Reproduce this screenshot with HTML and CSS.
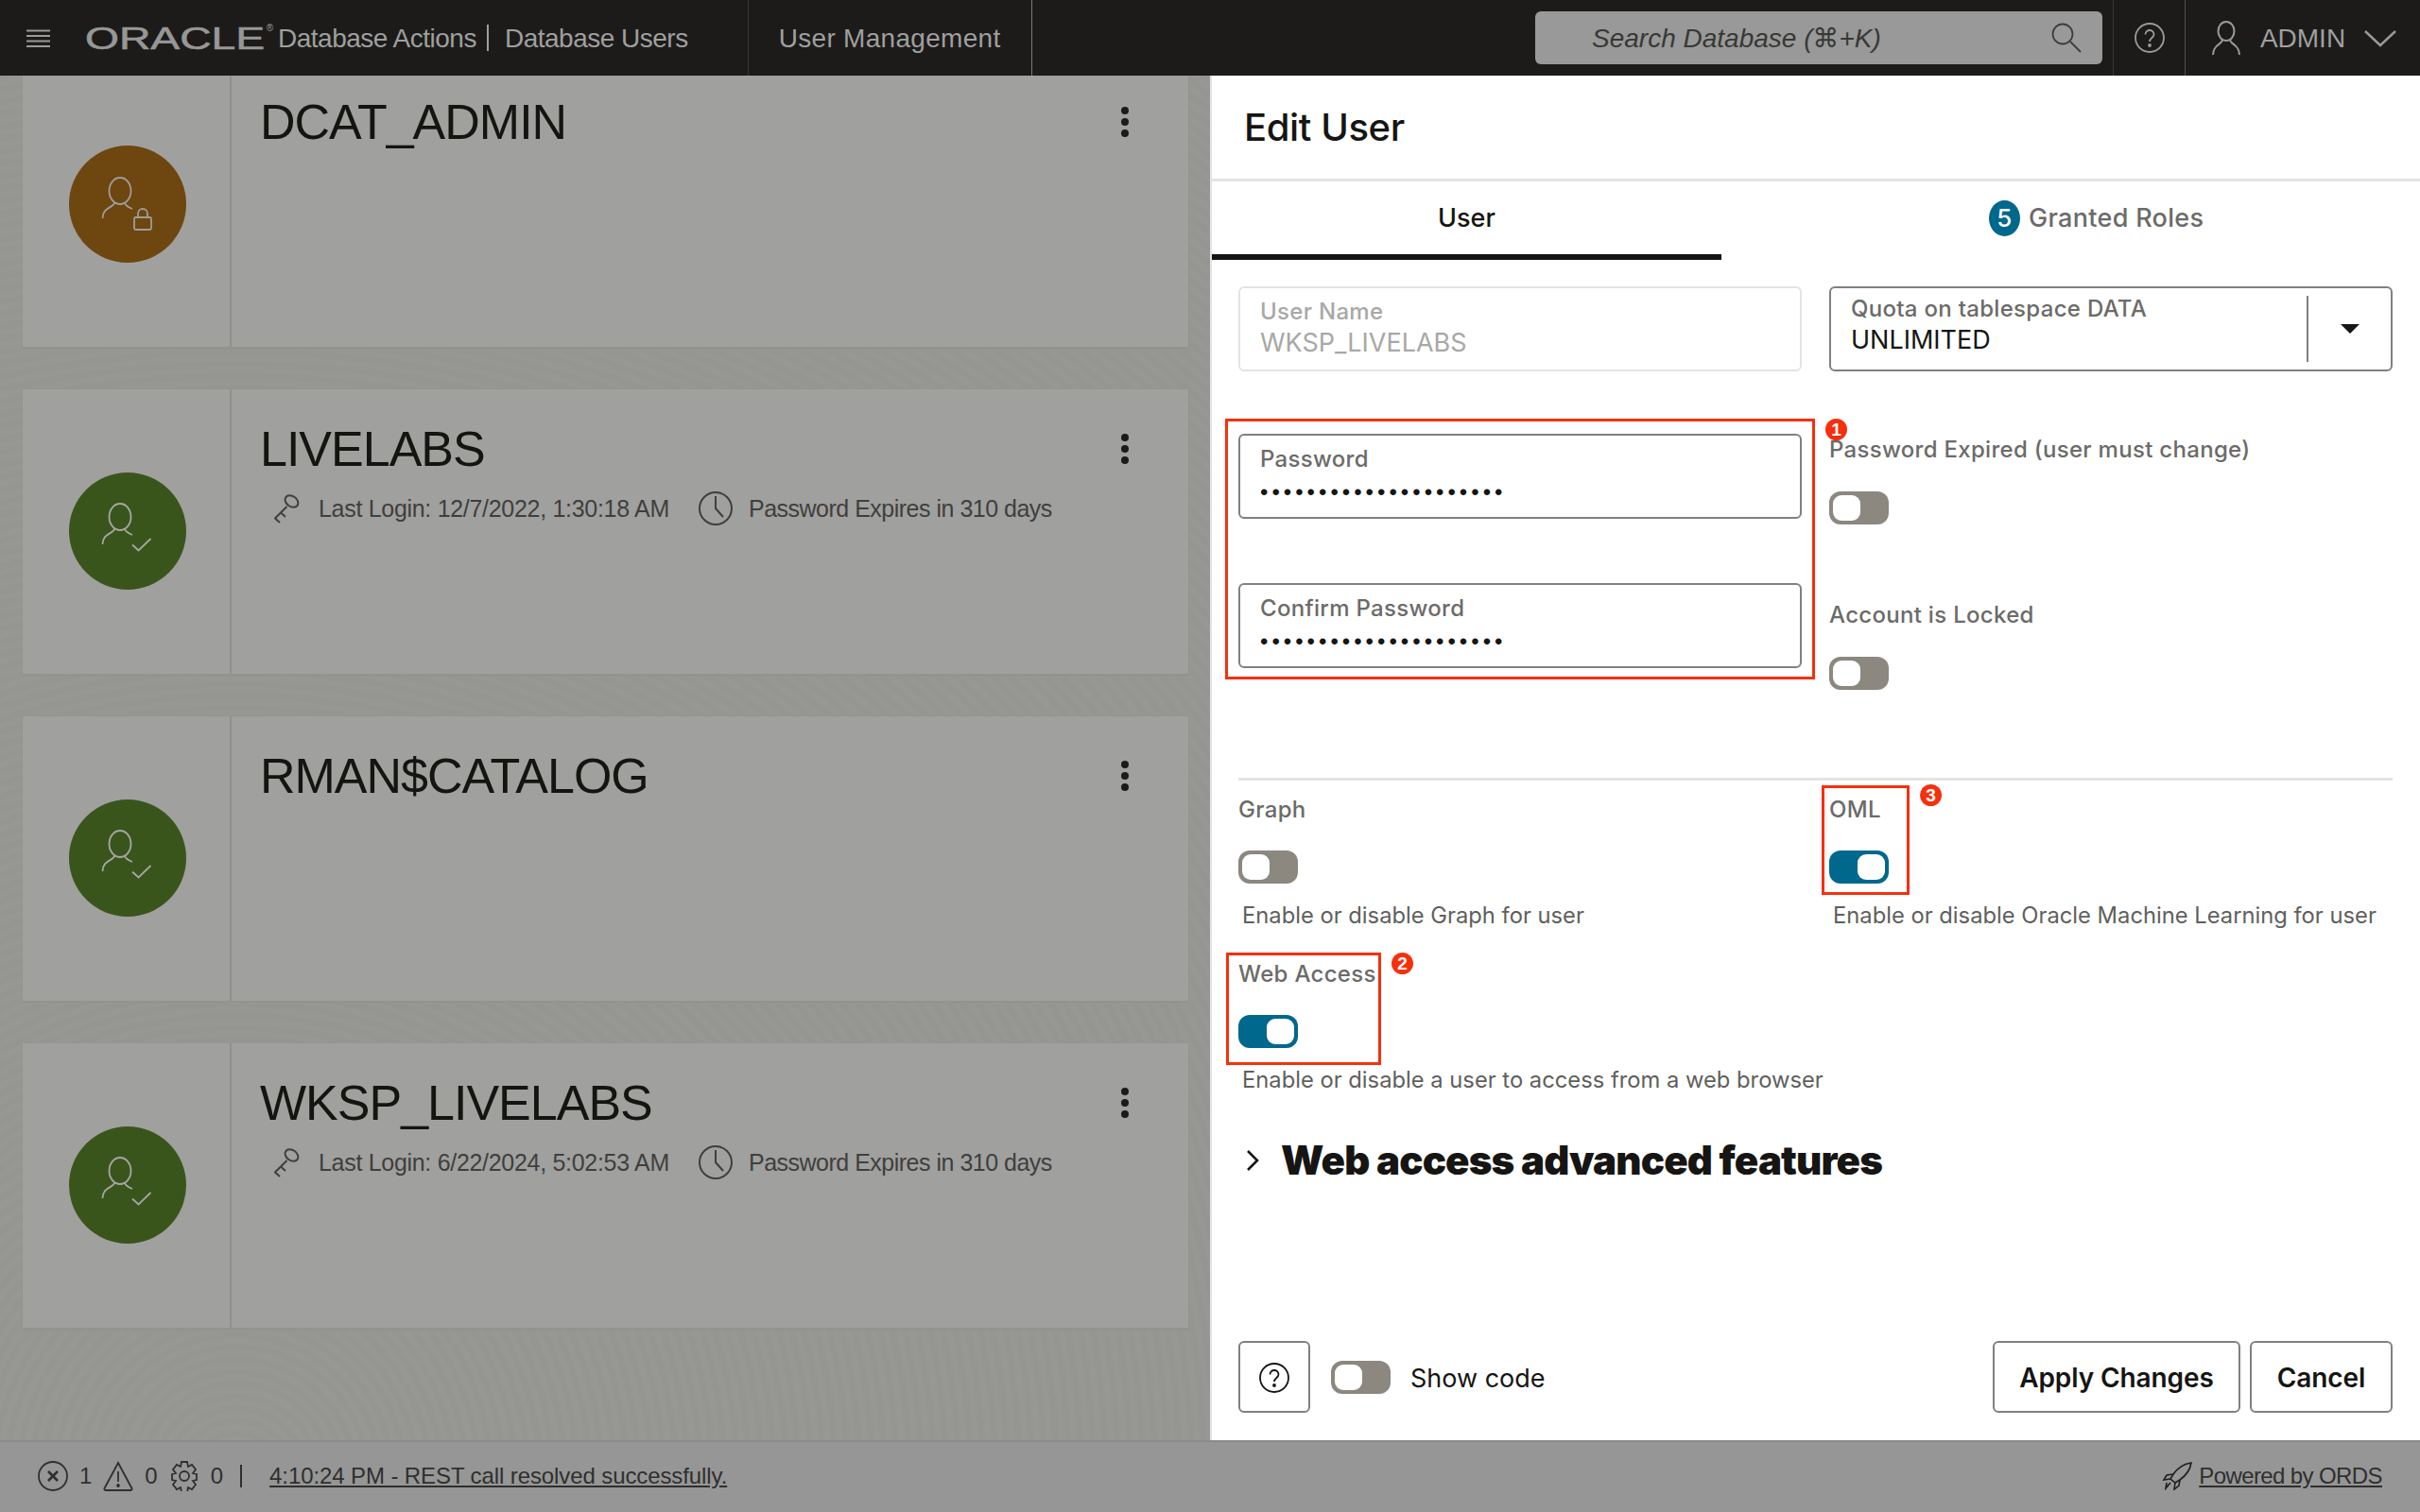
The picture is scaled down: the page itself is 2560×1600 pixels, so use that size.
FILE: index.html
```html
<!DOCTYPE html>
<html lang="en">
<head>
    <meta charset="UTF-8">
    <meta name="viewport" content="width=device-width, initial-scale=1.0">
    <title>Database Users</title>
    <link rel="stylesheet" href="styles.css">
</head>
<body>

    <header class="topbar">
        <svg class="burger" width="25" height="19" viewBox="0 0 25 19"><path d="M0 1.5h25M0 7h25M0 12.5h25M0 18h25" stroke="#9a9a9a" stroke-width="2"/></svg>
        <div class="logo"><span class="logo-text">ORACLE</span><span class="logo-reg">®</span></div>
        <span class="crumb">Database Actions</span>
        <span class="crumb-bar"></span>
        <span class="crumb">Database Users</span>
        <div class="top-tab">User Management</div>
        <div class="search">
            <span>Search Database (⌘+K)</span>
            <svg width="32" height="32" viewBox="0 0 32 32" fill="none" stroke="#3d3d3b" stroke-width="1.8"><circle cx="12" cy="12" r="10.5"/><path d="M20 20l11 11"/></svg>
        </div>
        <div class="top-help">
            <svg width="32" height="32" viewBox="0 0 32 32" fill="none" stroke="#9a9a9a" stroke-width="1.8"><circle cx="16" cy="16" r="15"/><path d="M11.5 12.5c0-6 9-6 9 0 0 3.500-4.500 3.500-4.500 7.500"/><circle cx="16" cy="24" r="1" fill="#9a9a9a"/></svg>
        </div>
        <div class="top-user">
            <svg width="32" height="38" viewBox="0 0 32 38" fill="none" stroke="#9a9a9a" stroke-width="2"><ellipse cx="16" cy="11" rx="8.500" ry="10"/><path d="M12 20c0 5-10 5-10 16M20 20c0 5 10 5 10 16"/></svg>
            <span>ADMIN</span>
            <svg width="34" height="18" viewBox="0 0 34 18" fill="none" stroke="#9a9a9a" stroke-width="2.400"><path d="M1 1l16 15L33 1"/></svg>
        </div>
    </header>

    <main class="content">
        <section class="user-list">
            <article class="card">
                <div class="card-side">
                    <div class="avatar avatar-locked">
                        <svg width="124" height="124" viewBox="0 0 124 124" fill="none" stroke="#9d9d9b" stroke-width="1.800"><ellipse cx="54" cy="48" rx="11.500" ry="14"/><path d="M48.500 60c-1 6-13 5-13 17M58.500 60c1 4 5 5.500 8.500 7"/><rect x="69" y="76" width="18" height="13" rx="1.500"/><path d="M73 76v-4a5 5 0 0 1 10 0v4"/></svg>
                    </div>
                </div>
                <div class="card-body">
                    <div class="card-head">
                        <h2>DCAT_ADMIN</h2>
                        <svg class="kebab" width="10" height="34" viewBox="0 0 10 34" fill="#1c1b19"><circle cx="5" cy="5" r="4"/><circle cx="5" cy="17" r="4"/><circle cx="5" cy="29" r="4"/></svg>
                    </div>
                </div>
            </article>

            <article class="card">
                <div class="card-side">
                    <div class="avatar avatar-open">
                        <svg width="124" height="124" viewBox="0 0 124 124" fill="none" stroke="#a6a6a4" stroke-width="1.800"><ellipse cx="54" cy="47" rx="11.500" ry="14"/><path d="M48.500 59c-1 6-13 5-13 17M58.500 59c1 4 5 5.500 8.500 7M67 76.500l6.500 6 13-12.500"/></svg>
                    </div>
                </div>
                <div class="card-body">
                    <div class="card-head">
                        <h2>LIVELABS</h2>
                        <svg class="kebab" width="10" height="34" viewBox="0 0 10 34" fill="#1c1b19"><circle cx="5" cy="5" r="4"/><circle cx="5" cy="17" r="4"/><circle cx="5" cy="29" r="4"/></svg>
                    </div>
                    <div class="card-meta">
                        <svg width="28" height="32" viewBox="0 0 28 32" fill="none" stroke="#3f3f3d" stroke-width="2"><ellipse cx="18.500" cy="8.500" rx="7.500" ry="5.500" transform="rotate(35 18.500 8.500)"/><path d="M13.500 14L1 26.500l5 4.500M7 20.500l5 4.500"/></svg>
                        <span class="meta-login">Last Login: 12/7/2022, 1:30:18 AM</span>
                        <svg width="36" height="36" viewBox="0 0 36 36" fill="none" stroke="#3f3f3d" stroke-width="2"><circle cx="18" cy="18" r="17"/><path d="M18 5v13l8 9"/></svg>
                        <span class="meta-expires">Password Expires in 310 days</span>
                    </div>
                </div>
            </article>

            <article class="card">
                <div class="card-side">
                    <div class="avatar avatar-open">
                        <svg width="124" height="124" viewBox="0 0 124 124" fill="none" stroke="#a6a6a4" stroke-width="1.800"><ellipse cx="54" cy="47" rx="11.500" ry="14"/><path d="M48.500 59c-1 6-13 5-13 17M58.500 59c1 4 5 5.500 8.500 7M67 76.500l6.500 6 13-12.500"/></svg>
                    </div>
                </div>
                <div class="card-body">
                    <div class="card-head">
                        <h2>RMAN$CATALOG</h2>
                        <svg class="kebab" width="10" height="34" viewBox="0 0 10 34" fill="#1c1b19"><circle cx="5" cy="5" r="4"/><circle cx="5" cy="17" r="4"/><circle cx="5" cy="29" r="4"/></svg>
                    </div>
                </div>
            </article>

            <article class="card">
                <div class="card-side">
                    <div class="avatar avatar-open">
                        <svg width="124" height="124" viewBox="0 0 124 124" fill="none" stroke="#a6a6a4" stroke-width="1.800"><ellipse cx="54" cy="47" rx="11.500" ry="14"/><path d="M48.500 59c-1 6-13 5-13 17M58.500 59c1 4 5 5.500 8.500 7M67 76.500l6.500 6 13-12.500"/></svg>
                    </div>
                </div>
                <div class="card-body">
                    <div class="card-head">
                        <h2>WKSP_LIVELABS</h2>
                        <svg class="kebab" width="10" height="34" viewBox="0 0 10 34" fill="#1c1b19"><circle cx="5" cy="5" r="4"/><circle cx="5" cy="17" r="4"/><circle cx="5" cy="29" r="4"/></svg>
                    </div>
                    <div class="card-meta">
                        <svg width="28" height="32" viewBox="0 0 28 32" fill="none" stroke="#3f3f3d" stroke-width="2"><ellipse cx="18.500" cy="8.500" rx="7.500" ry="5.500" transform="rotate(35 18.500 8.500)"/><path d="M13.500 14L1 26.500l5 4.500M7 20.500l5 4.500"/></svg>
                        <span class="meta-login">Last Login: 6/22/2024, 5:02:53 AM</span>
                        <svg width="36" height="36" viewBox="0 0 36 36" fill="none" stroke="#3f3f3d" stroke-width="2"><circle cx="18" cy="18" r="17"/><path d="M18 5v13l8 9"/></svg>
                        <span class="meta-expires">Password Expires in 310 days</span>
                    </div>
                </div>
            </article>
        </section>

        <aside class="panel">
            <h1 class="panel-title">Edit User</h1>

            <div class="tabs">
                <div class="tab tab-active">User</div>
                <div class="tab tab-roles"><span class="count">5</span>Granted Roles</div>
            </div>

            <div class="form">
                <div class="form-row">
                    <div class="field field-disabled">
                        <label>User Name</label>
                        <div class="value">WKSP_LIVELABS</div>
                    </div>
                    <div class="field field-select">
                        <div class="select-text">
                            <label>Quota on tablespace DATA</label>
                            <div class="value">UNLIMITED</div>
                        </div>
                        <span class="select-arrow"></span>
                    </div>
                </div>

                <div class="form-row row-password">
                    <div class="stack-fields">
                        <div class="field">
                            <label>Password</label>
                            <div class="dots">•••••••••••••••••••••</div>
                        </div>
                        <div class="field">
                            <label>Confirm Password</label>
                            <div class="dots">•••••••••••••••••••••</div>
                        </div>
                    </div>
                    <div class="stack-switches">
                        <div class="label-switch">
                            <label>Password Expired (user must change)</label>
                            <span class="switch"></span>
                        </div>
                        <div class="label-switch">
                            <label>Account is Locked</label>
                            <span class="switch"></span>
                        </div>
                    </div>
                </div>

                <hr class="rule">

                <div class="form-row row-toggles">
                    <div class="label-switch">
                        <label>Graph</label>
                        <span class="switch"></span>
                        <p class="help">Enable or disable Graph for user</p>
                    </div>
                    <div class="label-switch">
                        <label>OML</label>
                        <span class="switch switch-on"></span>
                        <p class="help">Enable or disable Oracle Machine Learning for user</p>
                    </div>
                    <div class="label-switch">
                        <label>Web Access</label>
                        <span class="switch switch-on"></span>
                        <p class="help">Enable or disable a user to access from a web browser</p>
                    </div>
                </div>

                <div class="advanced">
                    <svg width="14" height="22" viewBox="0 0 14 22" fill="none" stroke="#161513" stroke-width="2.600"><path d="M2 1l10 10L2 21"/></svg>
                    <h3>Web access advanced features</h3>
                </div>
            </div>

            <div class="actions">
                <button class="btn btn-help">
                    <svg width="32" height="32" viewBox="0 0 32 32" fill="none" stroke="#161513" stroke-width="1.800"><circle cx="16" cy="16" r="15"/><path d="M11.500 12.500c0-6 9-6 9 0 0 3.500-4.500 3.500-4.500 7.500"/><circle cx="16" cy="24" r="1" fill="#161513"/></svg>
                </button>
                <span class="switch"></span>
                <span class="show-code">Show code</span>
                <button class="btn btn-apply">Apply Changes</button>
                <button class="btn btn-cancel">Cancel</button>
            </div>

            <!-- red annotations from the tutorial -->
            <div class="mark-box box-password"></div>
            <div class="mark-box box-oml"></div>
            <div class="mark-box box-web"></div>
            <span class="mark-num num-1">1</span>
            <span class="mark-num num-2">2</span>
            <span class="mark-num num-3">3</span>
        </aside>
    </main>

    <footer class="statusbar">
        <svg width="32" height="32" viewBox="0 0 32 32" fill="none" stroke="#2f2f2e" stroke-width="1.800"><circle cx="16" cy="16" r="15"/><path d="M11 11l10 10M21 11L11 21" stroke-width="2.600"/></svg>
        <span class="stat">1</span>
        <svg width="32" height="32" viewBox="0 0 32 32" fill="none" stroke="#2f2f2e" stroke-width="1.800"><path d="M16 2L1.500 29a1.500 1.500 0 0 0 1 2h27a1.500 1.500 0 0 0 1-2z"/><path d="M16 11v11"/><circle cx="16" cy="26" r="1" fill="#2f2f2e"/></svg>
        <span class="stat">0</span>
        <svg width="32" height="32" viewBox="0 0 32 32" fill="none" stroke="#2f2f2e" stroke-width="1.800"><circle cx="16" cy="16" r="5"/><path d="M13 1h6l1 5 4-2 4 5-3 4 4 1v6l-4 1 3 4-4 5-4-2-1 5h-6l-1-5-4 2-4-5 3-4-4-1v-6l4-1-3-4 4-5 4 2z"/></svg>
        <span class="stat">0</span>
        <span class="stat-bar"></span>
        <a class="status-link">4:10:24 PM - REST call resolved successfully.</a>
        <svg class="rocket" width="32" height="30" viewBox="0 0 32 30" fill="none" stroke="#1f1f1e" stroke-width="1.600"><path d="M31 1c-8 1-14 5-19 12l-3 5 5 4 5-3c7-5 11-12 12-18z"/><path d="M12 13l-7 1-3 5 7-1M19 19l-1 6-5 4 1-7M9 22l-5 6 1-6"/></svg>
        <a class="status-link status-ords">Powered by ORDS</a>
    </footer>

</body>
</html>
```

FILE: styles.css
```css
* {
    box-sizing: border-box;
}

html, body {
    height: 100%;
}

body {
    margin: 0;
    display: flex;
    flex-direction: column;
    height: 1600px;
    overflow: hidden;
    font-family: Inter, "Liberation Sans", sans-serif;
    color: #161513;
    background-color: #969693;
}

label {
    display: block;
}

/* top bar */
.topbar {
    flex: 0 0 80px;
    display: flex;
    align-items: center;
    background-color: #1c1b19;
    color: #9f9f9f;
    font-family: "Liberation Sans", sans-serif;
    font-size: 28px;
}

.burger {
    margin-left: 28px;
    flex: none;
}

.logo {
    width: 204px;
    margin-left: 37px;
    display: flex;
    align-items: flex-start;
    flex: none;
}

.logo-text {
    display: inline-block;
    font-size: 34px;
    line-height: 34px;
    transform: scaleX(1.36);
    transform-origin: left;
    color: #979797;
    -webkit-text-stroke: 0.6px #979797;
}

.logo-reg {
    margin-left: 52px;
    font-size: 10px;
    line-height: 14px;
}

.crumb {
    padding-top: 2px;
    letter-spacing: -0.5px;
    white-space: nowrap;
}

.crumb-bar {
    width: 2px;
    height: 28px;
    margin: 0 17px 0 11px;
    background-color: #9f9f9f;
}

.top-tab {
    height: 80px;
    margin-left: 63px;
    padding: 2px 32px 0;
    display: flex;
    align-items: center;
    border-left: 1px solid #383734;
    border-right: 1px solid #77766f;
    letter-spacing: 0.3px;
    white-space: nowrap;
}

.search {
    width: 600px;
    height: 56px;
    margin-left: auto;
    padding: 0 22px 0 60px;
    display: flex;
    align-items: center;
    justify-content: space-between;
    border-radius: 6px;
    background-color: #999999;
    color: #383836;
    font-style: italic;
    font-family: "Liberation Sans", "DejaVu Sans", sans-serif;
}

.top-help {
    height: 80px;
    width: 77px;
    margin-left: 11px;
    display: flex;
    align-items: center;
    justify-content: center;
    border-left: 1px solid #383734;
    border-right: 1px solid #4f4e4b;
}

.top-user {
    width: 248px;
    padding: 2px 25px 0 27px;
    display: flex;
    align-items: center;
    justify-content: space-between;
}

/* main area */
.content {
    flex: 1;
    display: flex;
    min-height: 0;
    overflow: hidden;
}

.user-list {
    flex: 0 0 1280px;
    margin-top: -15px;
    padding: 0 22px 0 23px;
    display: flex;
    flex-direction: column;
    gap: 41px;
    background-image: repeating-radial-gradient(circle at 250px 1500px, rgba(255, 255, 255, 0.006) 0 6px, rgba(0, 0, 0, 0.006) 6px 13px);
}

.card {
    flex: 0 0 305px;
    display: flex;
    background-color: #a0a09e;
    border: 1px solid #93938f;
    border-bottom-width: 3px;
}

.card-side {
    flex: 0 0 221px;
    padding: 0 0 2px 2px;
    display: flex;
    align-items: center;
    justify-content: center;
    border-right: 2px solid #90908e;
}

.avatar {
    width: 124px;
    height: 124px;
    border-radius: 50%;
}

.avatar svg {
    display: block;
}

.avatar-locked {
    background-color: #6e460f;
}

.avatar-open {
    background-color: #3a551c;
}

.card-body {
    flex: 1;
    padding: 33px 62px 0 30px;
}

.card-head {
    display: flex;
    align-items: center;
    justify-content: space-between;
}

.card-head h2 {
    margin: 0;
    font-family: "Liberation Sans", sans-serif;
    font-size: 52px;
    font-weight: 400;
    line-height: 60px;
    letter-spacing: -1px;
    color: #141411;
}

.card-meta {
    margin: 13px 0 0 15px;
    height: 40px;
    display: flex;
    align-items: center;
    font-family: "Liberation Sans", sans-serif;
    font-size: 25px;
    color: #3f3f3d;
}

.card-meta span {
    white-space: nowrap;
}

.card-meta .meta-login {
    margin-left: 19px;
    margin-right: 31px;
    letter-spacing: -0.3px;
}

.card-meta .meta-expires {
    margin-left: 17px;
    letter-spacing: -0.5px;
}

/* edit panel */
.panel {
    flex: 0 0 1280px;
    position: relative;
    display: flex;
    flex-direction: column;
    background-color: #fff;
    border-left: 2px solid #e4e4e4;
}

.panel-title {
    flex: 0 0 112px;
    margin: 0;
    padding: 30px 0 0 34px;
    font-size: 40px;
    font-weight: 500;
    line-height: 50px;
    letter-spacing: -0.4px;
    border-bottom: 3px solid #e4e4e4;
}

.tabs {
    flex: 0 0 83px;
    display: flex;
    font-size: 27px;
}

.tab {
    display: flex;
    align-items: center;
    height: 83px;
}

.tab-active {
    flex: 0 0 539px;
    justify-content: center;
    border-bottom: 6px solid #161513;
    font-weight: 500;
}

.tab-roles {
    padding-left: 283px;
    padding-bottom: 6px;
    color: #6b6b69;
    font-weight: 500;
    letter-spacing: 0.3px;
}

.count {
    width: 33px;
    height: 38px;
    margin-right: 9px;
    display: flex;
    align-items: center;
    justify-content: center;
    border-radius: 50%;
    background-color: #00688c;
    color: #fff;
    font-size: 26px;
}

.form {
    padding: 28px 29px 0 28px;
}

.form-row {
    display: grid;
    grid-template-columns: 596px 596px;
    column-gap: 29px;
}

.field {
    height: 90px;
    padding: 10px 20px 0 21px;
    border: 2px solid #808080;
    border-radius: 6px;
}

.field label, .label-switch label {
    font-size: 24px;
    line-height: 30px;
    font-weight: 500;
    letter-spacing: 0.3px;
    color: #6b6b69;
}

.value {
    font-size: 27px;
    line-height: 32px;
    margin-top: 2px;
}

.field-disabled {
    border-color: #e4e4e4;
}

.field-disabled label, .field-disabled .value {
    color: #a8a8a6;
}

.field-select {
    display: flex;
    align-items: stretch;
    padding: 8px 33px 8px 21px;
}

.select-text {
    flex: 1;
    border-right: 2px solid #808080;
}

.select-text label {
    line-height: 28px;
}

.select-text .value {
    margin-top: 3px;
}

.select-arrow {
    align-self: center;
    margin-left: 34px;
    width: 0;
    height: 0;
    border-left: 10px solid transparent;
    border-right: 10px solid transparent;
    border-top: 10px solid #161513;
}

.dots {
    font-size: 24px;
    line-height: 30px;
    margin-top: 5px;
    letter-spacing: 4px;
    font-family: "Liberation Sans", sans-serif;
    white-space: nowrap;
}

.row-password {
    margin-top: 66px;
    height: 364px;
}

.stack-fields {
    display: flex;
    flex-direction: column;
    gap: 68px;
}

.stack-switches {
    display: flex;
    flex-direction: column;
    gap: 79px;
}

.label-switch label {
    height: 34px;
    line-height: 34px;
    margin-bottom: 26px;
}

.stack-switches .label-switch label {
    margin-bottom: 27px;
}

.switch {
    display: block;
    position: relative;
    width: 63px;
    height: 35px;
    border-radius: 12px;
    background-color: #8c877f;
}

.switch::after {
    content: "";
    position: absolute;
    top: 4px;
    left: 4px;
    width: 29px;
    height: 27px;
    border-radius: 9px;
    background-color: #fff;
}

.switch-on {
    background-color: #00688c;
}

.switch-on::after {
    left: 30px;
}

.rule {
    height: 3px;
    margin: 0;
    border: 0;
    background-color: #e4e4e4;
}

.row-toggles {
    margin-top: 14px;
    row-gap: 28px;
}

.help {
    margin: 17px 0 0 4px;
    font-size: 23.75px;
    font-weight: 400;
    line-height: 34px;
    color: #5f5f5d;
    white-space: nowrap;
}

.advanced {
    margin-top: 43px;
    padding-left: 8px;
    display: flex;
    align-items: center;
    gap: 23px;
}

.advanced h3 {
    margin: 0;
    font-size: 42px;
    font-weight: 900;
    line-height: 50px;
    letter-spacing: -0.85px;
}

.actions {
    margin-top: auto;
    padding: 0 29px 29px 28px;
    display: flex;
    align-items: center;
}

.btn {
    height: 76px;
    padding: 2px 0 0;
    display: flex;
    align-items: center;
    justify-content: center;
    background-color: #fff;
    border: 2px solid #808080;
    border-radius: 6px;
    font-family: Inter, sans-serif;
    font-size: 28px;
    font-weight: 600;
    letter-spacing: -0.1px;
    color: #161513;
}

.btn-help {
    width: 76px;
    margin-right: 22px;
}

.show-code {
    margin-left: 21px;
    padding-top: 2px;
    font-size: 27px;
}

.btn-apply {
    width: 262px;
    margin-left: auto;
}

.btn-cancel {
    width: 151px;
    margin-left: 10px;
}

/* annotations */
.mark-box {
    position: absolute;
    border: 3px solid #f5300d;
}

.box-password {
    left: 14px;
    top: 363px;
    width: 624px;
    height: 276px;
}

.box-oml {
    left: 645px;
    top: 751px;
    width: 93px;
    height: 116px;
}

.box-web {
    left: 15px;
    top: 928px;
    width: 164px;
    height: 119px;
}

.mark-num {
    position: absolute;
    width: 23px;
    height: 23px;
    border-radius: 50%;
    background-color: #f5300d;
    color: #fff;
    font-family: "Liberation Sans", sans-serif;
    font-size: 19px;
    font-weight: 700;
    line-height: 23px;
    text-align: center;
}

.num-1 {
    left: 649px;
    top: 363px;
}

.num-2 {
    left: 190px;
    top: 928px;
}

.num-3 {
    left: 749px;
    top: 750px;
}

/* status bar */
.statusbar {
    flex: 0 0 76px;
    padding: 0 40px 2px;
    display: flex;
    align-items: center;
    background-color: #969696;
    border-top: 2px solid #8b8b89;
    font-size: 24px;
    color: #2f2f2e;
}

.stat {
    margin: 0 12px;
    font-family: "Liberation Sans", sans-serif;
}

.stat-bar {
    width: 2px;
    height: 24px;
    margin: 0 29px 0 6px;
    background-color: #2f2f2e;
}

.status-link {
    font-family: "Liberation Sans", sans-serif;
    letter-spacing: -0.1px;
    text-decoration: underline;
    color: #2f2f2e;
}

.status-ords {
    letter-spacing: -0.6px;
}

.rocket {
    margin-left: auto;
    margin-right: 7px;
}
```
